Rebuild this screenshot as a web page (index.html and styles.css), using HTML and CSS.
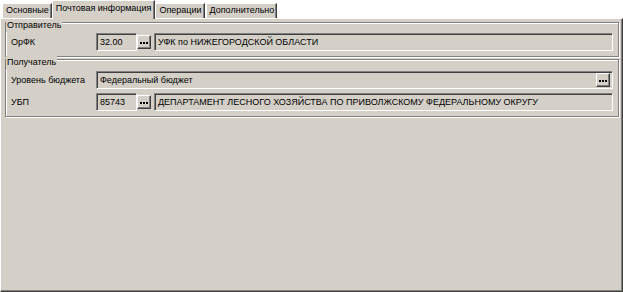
FILE: index.html
```html
<!DOCTYPE html>
<html lang="ru">
<head>
<meta charset="utf-8">
<title>Почтовая информация</title>
<link rel="stylesheet" href="styles.css">
</head>
<body>
<div class="window">
  <div class="tabs">
    <div class="tab tab-first">Основные</div>
    <div class="tab active">Почтовая информация</div>
    <div class="tab">Операции</div>
    <div class="tab">Дополнительно</div>
  </div>
  <div class="panel">
    <div class="group g1">
      <div class="caption">Отправитель</div>
      <div class="row">
        <div class="label">ОрФК</div>
        <div class="field code">32.00</div>
        <div class="btn"><svg width="8" height="2" viewBox="0 0 8 2"><rect x="0" y="0" width="2" height="2"/><rect x="3" y="0" width="2" height="2"/><rect x="6" y="0" width="2" height="2"/></svg></div>
        <div class="field wide">УФК по НИЖЕГОРОДСКОЙ ОБЛАСТИ</div>
      </div>
    </div>
    <div class="group g2">
      <div class="caption">Получатель</div>
      <div class="row">
        <div class="label">Уровень бюджета</div>
        <div class="field combo">
          <span class="combo-text">Федеральный бюджет</span>
          <div class="btn"><svg width="8" height="2" viewBox="0 0 8 2"><rect x="0" y="0" width="2" height="2"/><rect x="3" y="0" width="2" height="2"/><rect x="6" y="0" width="2" height="2"/></svg></div>
        </div>
      </div>
      <div class="row row2">
        <div class="label">УБП</div>
        <div class="field code">85743</div>
        <div class="btn"><svg width="8" height="2" viewBox="0 0 8 2"><rect x="0" y="0" width="2" height="2"/><rect x="3" y="0" width="2" height="2"/><rect x="6" y="0" width="2" height="2"/></svg></div>
        <div class="field wide">ДЕПАРТАМЕНТ ЛЕСНОГО ХОЗЯЙСТВА ПО ПРИВОЛЖСКОМУ ФЕДЕРАЛЬНОМУ ОКРУГУ</div>
      </div>
    </div>
  </div>
</div>
</body>
</html>
```
FILE: styles.css
```css
* { box-sizing: border-box; }
html, body { margin: 0; padding: 0; }
body {
  width: 623px;
  height: 292px;
  background: #ffffff;
  font-family: "Liberation Sans", Arial, sans-serif;
  font-size: 9px;
  color: #000;
  overflow: hidden;
}
.window {
  display: flex;
  flex-direction: column;
  height: 292px;
}
.tabs {
  display: flex;
  align-items: flex-end;
  height: 18px;
  padding-left: 2px;
  position: relative;
  z-index: 1;
}
.tab {
  height: 15px;
  line-height: 13px;
  padding: 0 2px 0 3px;
  background: #d4d0c8;
  border-top: 1px solid #fff;
  border-left: 1px solid #fff;
  border-right: 1px solid #404040;
  box-shadow: inset -1px 0 0 #808080;
  white-space: nowrap;
  margin-right: 1px;
}
.tab.active {
  height: 19px;
  margin-bottom: -1px;
  line-height: 15px;
  padding: 0 3px 0 3px;
  margin-left: -1px;
  margin-right: 0;
}
.panel {
  flex: 1;
  background: #d4d0c8;
  border: 1px solid;
  border-color: #fff #404040 #404040 #fff;
  box-shadow: inset -1px -1px 0 #808080;
  padding: 3px 3px 0 4px;
}
.group {
  border: 1px solid #808080;
  box-shadow: inset 1px 1px 0 #fff, 1px 1px 0 #fff;
  display: flex;
  flex-direction: column;
}
.g1 { padding-bottom: 5px; }
.g2 { margin-top: 2px; padding-bottom: 5px; }
.caption {
  align-self: flex-start;
  margin-top: -4px;
  background: #d4d0c8;
  padding: 0 1px;
  line-height: 13px;
  height: 13px;
}
.row {
  display: flex;
  align-items: center;
  height: 18px;
  margin: 1px 5px 0 0;
}
.g2 .row { margin-top: 2px; }
.g2 .row2 { margin-top: 4px; }
.label {
  width: 90px;
  padding-left: 5px;
  flex: none;
  white-space: nowrap;
}
.field {
  height: 18px;
  border: 1px solid;
  border-color: #808080 #fff #fff #808080;
  box-shadow: inset 1px 1px 0 #404040, inset -1px -1px 0 #d4d0c8;
  background: #d4d0c8;
  padding: 2px 0 0 3px;
  line-height: 13px;
  white-space: nowrap;
  overflow: hidden;
}
.code { width: 41px; flex: none; }
.wide { flex: 1; margin-left: 3px; }
.btn {
  width: 14px;
  height: 14px;
  flex: none;
  border: 1px solid;
  border-color: #fff #404040 #404040 #fff;
  box-shadow: inset -1px -1px 0 #808080;
  background: #d4d0c8;
  display: flex;
  align-items: flex-end;
  justify-content: center;
  padding-bottom: 4px;
}
.btn svg { display: block; fill: #000; }
.combo {
  flex: 1;
  display: flex;
  align-items: center;
  padding: 0 2px 0 3px;
}
.combo-text { flex: 1; }
```
